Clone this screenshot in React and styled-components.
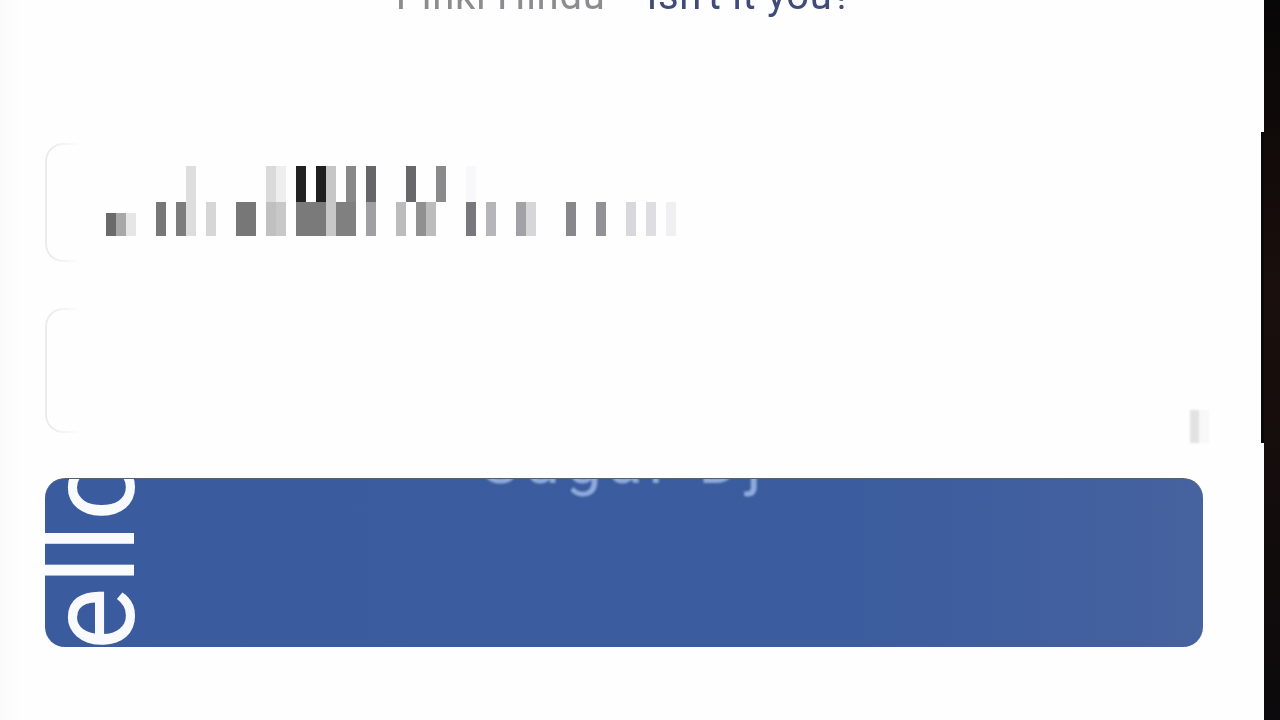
import React from "react";
import styled, { createGlobalStyle } from "styled-components";

const GlobalStyle = createGlobalStyle`
  html, body {
    margin: 0;
    height: 100%;
    overflow: hidden;
    background: #fefefe;
    font-family: Roboto, "Liberation Sans", sans-serif;
  }
`;

const Screen = styled.div`
  display: flex;
  width: 1280px;
  height: 720px;
  overflow: hidden;
`;

const Main = styled.main`
  flex: 1;
  display: flex;
  flex-direction: column;
  padding: 0 61px 0 45px;
  background: linear-gradient(90deg, #fafafa 0, #fefefe 22px);
`;

const Edge = styled.div`
  position: relative;
  width: 16px;
  background: linear-gradient(180deg, #070606 0, #1a0f0c 40%, #0c0a0c 100%);
  &::before {
    content: "";
    position: absolute;
    left: -3px;
    top: 132px;
    width: 3px;
    height: 311px;
    background: #0a0a0a;
  }
`;

const Account = styled.div`
  height: 20px;
  display: flex;
  justify-content: center;
  align-items: flex-end;
  gap: 41px;
  overflow: hidden;
  font-size: 40px;
  line-height: 48px;
  letter-spacing: 0.7px;
  white-space: nowrap;
  filter: blur(0.6px);
`;

const Name = styled.span`
  flex: none;
  color: #8c8c90;
`;

const Switch = styled.span`
  flex: none;
  color: #3f4b78;
`;

const Field = styled.div`
  position: relative;
  height: ${(p) => p.$height}px;
  margin-top: ${(p) => p.$top}px;
  padding: 23px 0 0 61px;
  box-sizing: border-box;
  &::before {
    content: "";
    position: absolute;
    inset: 0;
    border: 2px solid #ebebed;
    border-radius: 18px;
    -webkit-mask-image: linear-gradient(90deg, #000 0, #000 6px, transparent 34px);
    mask-image: linear-gradient(90deg, #000 0, #000 6px, transparent 34px);
  }
`;

const Mosaic = styled.div`
  display: grid;
  grid-template-columns: repeat(58, 10px);
  grid-template-rows: 36px 34px;
  filter: blur(0.4px);
`;

const Block = styled.span`
  grid-row: ${(p) => p.$row};
  grid-column: ${(p) => p.$col + 1};
  background: ${(p) => p.$tone};
  align-self: end;
  height: ${(p) => (p.$short ? 23 : p.$row === 1 ? 36 : 34)}px;
`;

const Smudge = styled.span`
  position: absolute;
  top: 102px;
  left: 1145px;
  width: 19px;
  height: 33px;
  background: linear-gradient(90deg, #e2e2e2 0, #e2e2e2 9px, #f8f8f8 9px, #f8f8f8 100%);
  filter: blur(1px);
`;

const LoginButton = styled.button`
  position: relative;
  display: block;
  width: 1158px;
  height: 169px;
  margin-top: 45px;
  padding: 0;
  border: 0;
  border-top: 1px solid #56606f;
  border-radius: 20px;
  overflow: hidden;
  background: linear-gradient(90deg, #3a5b9d 0, #3b5c9e 70%, #46629f 100%);
  font-family: Roboto, "Liberation Sans", sans-serif;
`;

const SideLabel = styled.span`
  position: absolute;
  left: 109px;
  bottom: -3px;
  transform-origin: 0 100%;
  transform: rotate(-90deg) scaleY(1.04);
  color: #f8fafd;
  font-size: 118px;
  line-height: 118px;
  letter-spacing: 3px;
  white-space: nowrap;
`;

const GhostLabel = styled.span`
  position: absolute;
  top: -49px;
  left: 0;
  right: 0;
  text-align: center;
  color: #8fabdc;
  font-size: 64px;
  line-height: 64px;
  letter-spacing: 6px;
  filter: blur(0.8px);
`;

const top = [
  [8, "#dedede"], [16, "#dadada"], [17, "#eeeeee"], [19, "#222222"], [21, "#1f1f1f"],
  [22, "#c6c6c6"], [24, "#888888"], [26, "#666668"], [30, "#68686a"], [33, "#8a8a8c"], [36, "#f8f8fa"],
];

const bottom = [
  [0, "#6a6a6a", true], [1, "#a8a8a8", true], [2, "#e6e6e6", true], [5, "#777777"], [7, "#7c7c7c"],
  [8, "#dddddd"], [10, "#d6d6d6"], [13, "#777777"], [14, "#777777"], [16, "#c0c0c0"], [17, "#c8c8c8"],
  [19, "#7a7a7a"], [20, "#7a7a7a"], [21, "#7a7a7a"], [22, "#c8c8c8"], [23, "#808080"], [24, "#808080"],
  [26, "#a0a0a4"], [29, "#bcbcbc"], [31, "#909090"], [32, "#bcbcbc"], [36, "#78787c"], [38, "#b6b6ba"],
  [41, "#a2a2a6"], [42, "#d6d6d8"], [46, "#88888c"], [49, "#929296"], [52, "#d8d8dc"], [54, "#dedee2"],
  [56, "#f0f0f2"],
];

export default function App() {
  return (
    <>
      <GlobalStyle />
      <Screen>
        <Main>
          <Account>
            <Name>Pinki Hindu</Name>
            <Switch>Isn't it you?</Switch>
          </Account>
          <Field $top={123} $height={119}>
            <Mosaic>
              {top.map(([col, tone]) => (
                <Block key={col} $row={1} $col={col} $tone={tone} />
              ))}
              {bottom.map(([col, tone, short]) => (
                <Block key={col} $row={2} $col={col} $tone={tone} $short={short} />
              ))}
            </Mosaic>
          </Field>
          <Field $top={46} $height={125}>
            <Smudge />
          </Field>
          <LoginButton>
            <GhostLabel>Sugar Dj</GhostLabel>
            <SideLabel>ello</SideLabel>
          </LoginButton>
        </Main>
        <Edge />
      </Screen>
    </>
  );
}
